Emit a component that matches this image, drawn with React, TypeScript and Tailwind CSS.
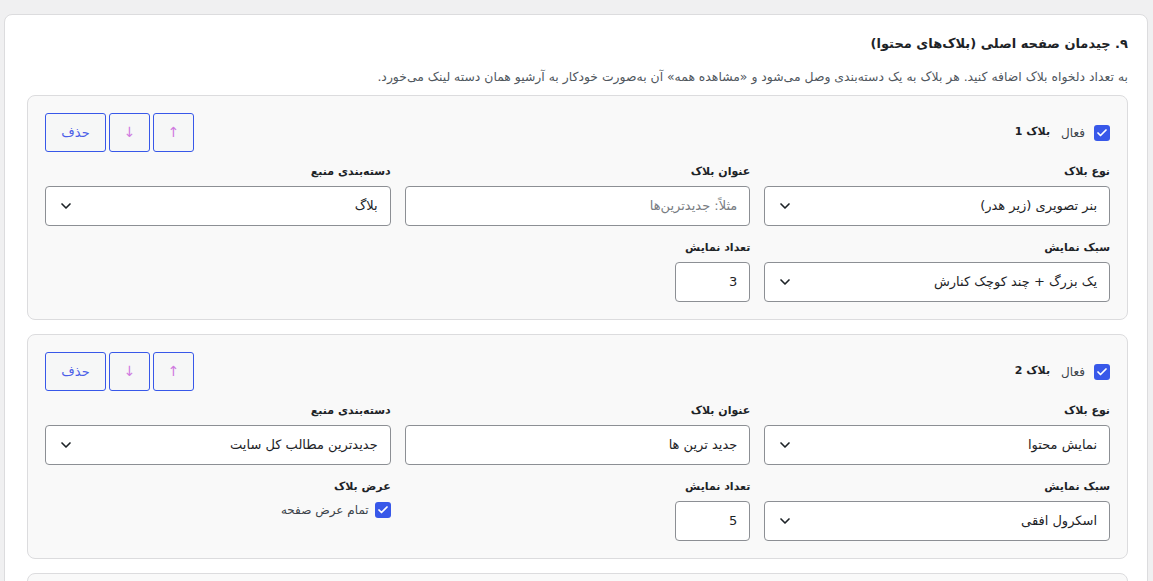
import { Check, ChevronDown } from "lucide-react";

type Block = {
  id: number;
  type: string;
  title: string;
  category: string;
  style: string;
  count: string;
  fullWidth: boolean;
};

const blocks: Block[] = [
  {
    id: 1,
    type: "بنر تصویری (زیر هدر)",
    title: "",
    category: "بلاگ",
    style: "یک بزرگ + چند کوچک کنارش",
    count: "3",
    fullWidth: false,
  },
  {
    id: 2,
    type: "نمایش محتوا",
    title: "جدید ترین ها",
    category: "جدیدترین مطالب کل سایت",
    style: "اسکرول افقی",
    count: "5",
    fullWidth: true,
  },
  {
    id: 3,
    type: "نمایش محتوا",
    title: "",
    category: "بلاگ",
    style: "اسکرول افقی",
    count: "4",
    fullWidth: true,
  },
];

const font = "font-['DejaVu_Sans','Noto_Sans',sans-serif]";

function Checkbox() {
  return (
    <span className="flex h-4 w-4 shrink-0 items-center justify-center rounded-[3px] bg-[#3858e9]">
      <Check className="h-3 w-3 text-white" strokeWidth={3.5} />
    </span>
  );
}

function Label({ children }: { children: string }) {
  return <div className="mb-[5px] text-[11px] font-bold leading-[18px] text-[#1d2327]">{children}</div>;
}

function Select({ value }: { value: string }) {
  return (
    <div className="flex h-10 items-center justify-between rounded-[4px] border border-[#8c8f94] bg-white px-[12px] text-[13px] text-[#1d2327]">
      <span>{value}</span>
      <ChevronDown className="h-4 w-4 text-[#1d2327]" strokeWidth={2.5} />
    </div>
  );
}

function TextInput({ value, placeholder }: { value: string; placeholder?: string }) {
  return (
    <div className="flex h-10 items-center rounded-[4px] border border-[#8c8f94] bg-white px-[12px] text-[13px]">
      {value ? (
        <span className="text-[#1d2327]">{value}</span>
      ) : (
        <span className="text-[#787c82]">{placeholder}</span>
      )}
    </div>
  );
}

function BlockCard({ block }: { block: Block }) {
  return (
    <section className="rounded-lg border border-[#dcdcde] bg-[#f9f9f9] p-[17px]">
      <div className="flex h-[39px] items-center justify-between">
        <div className="flex items-center gap-[9px]">
          <Checkbox />
          <span className="text-[12px] text-[#3c434a]">فعال</span>
          <span className="mr-[2px] text-[11px] font-bold text-[#1d2327]">بلاک {block.id}</span>
        </div>
        <div className="flex h-[39px] gap-[3px]">
          <button className="w-[41px] rounded-[3px] border border-[#3858e9] bg-[#f6f7f7] text-[14px] text-[#d07be0]">↑</button>
          <button className="w-[41px] rounded-[3px] border border-[#3858e9] bg-[#f6f7f7] text-[14px] text-[#d07be0]">↓</button>
          <button className="w-[61px] rounded-[3px] border border-[#3858e9] bg-[#f6f7f7] text-[13px] text-[#4c5ee8]">حذف</button>
        </div>
      </div>

      <div className="mt-[11px] grid grid-cols-3 gap-x-[14px] gap-y-[13px]">
        <div>
          <Label>نوع بلاک</Label>
          <Select value={block.type} />
        </div>
        <div>
          <Label>عنوان بلاک</Label>
          <TextInput value={block.title} placeholder="مثلاً: جدیدترین‌ها" />
        </div>
        <div>
          <Label>دسته‌بندی منبع</Label>
          <Select value={block.category} />
        </div>

        <div>
          <Label>سبک نمایش</Label>
          <Select value={block.style} />
        </div>
        <div>
          <Label>تعداد نمایش</Label>
          <div className="flex h-10 w-[75px] items-center rounded-[4px] border border-[#8c8f94] bg-white px-[12px] text-[13px] text-[#1d2327]">
            {block.count}
          </div>
        </div>
        {block.fullWidth ? (
          <div>
            <Label>عرض بلاک</Label>
            <div className="flex items-center gap-[6px]">
              <Checkbox />
              <span className="text-[12px] text-[#3c434a]">تمام عرض صفحه</span>
            </div>
          </div>
        ) : (
          <div />
        )}
      </div>
    </section>
  );
}

export default function App() {
  return (
    <main dir="rtl" className={`min-h-screen bg-[#f0f0f1] pb-10 pl-[4px] pr-[5px] pt-[14px] ${font}`}>
      <div className="rounded-lg border border-[#dcdcde] bg-white pb-6 pl-[22px] pr-[19px] pt-[18px]">
        <h2 className="text-[13px] font-bold leading-[22px] text-[#1d2327]">۹. چیدمان صفحه اصلی (بلاک‌های محتوا)</h2>
        <p className="mt-[13px] text-[12.4px] leading-[18px] text-[#50575e]">
          به تعداد دلخواه بلاک اضافه کنید. هر بلاک به یک دسته‌بندی وصل می‌شود و «مشاهده همه» آن به‌صورت خودکار به آرشیو همان دسته لینک می‌خورد.
        </p>
        <div className="mt-[9px] space-y-[14px]">
          {blocks.map((block) => (
            <BlockCard key={block.id} block={block} />
          ))}
        </div>
      </div>
    </main>
  );
}
